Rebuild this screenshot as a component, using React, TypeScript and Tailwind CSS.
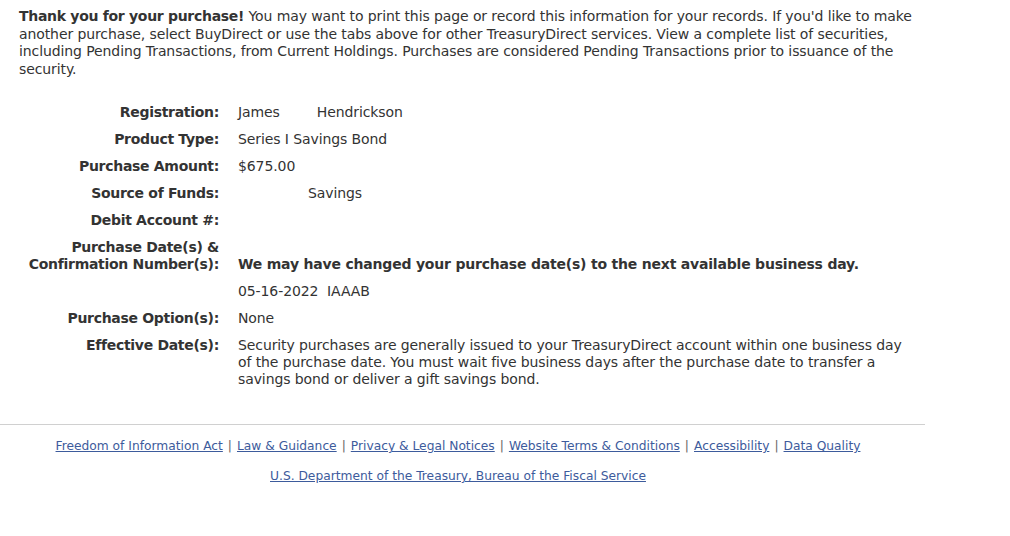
const rows = [
  { label: 'Registration:', value: 'registration' },
  { label: 'Product Type:', value: 'Series I Savings Bond' },
  { label: 'Purchase Amount:', value: '$675.00' },
  { label: 'Source of Funds:', value: 'funds' },
  { label: 'Debit Account #:', value: '' },
];

const footerLinks = [
  'Freedom of Information Act',
  'Law & Guidance',
  'Privacy & Legal Notices',
  'Website Terms & Conditions',
  'Accessibility',
  'Data Quality',
];

const Row = ({ label, children, align = 'items-start' }: { label: React.ReactNode; children?: React.ReactNode; align?: string }) => (
  <div className={`flex ${align} py-[5px]`}>
    <div className="w-[200px] shrink-0 text-right font-bold tracking-[-0.3px]">{label}</div>
    <div className="pl-[19px] flex-1">{children}</div>
  </div>
);

export default function App() {
  return (
    <div className="w-[1010px] h-[536px] bg-white text-[#333] text-[14px] leading-[17px] tracking-[-0.1px]" style={{ fontFamily: '"DejaVu Sans", Verdana, sans-serif' }}>
      <div className="w-[925px]">
        <div className="pl-[19px] pt-[8px]">
          <p className="leading-[17.6px]">
            <b className="tracking-[-0.3px]">Thank you for your purchase!</b> You may want to print this page or record this information for your records. If you'd like to make another purchase, select BuyDirect or use the tabs above for other TreasuryDirect services. View a complete list of securities, including Pending Transactions, from Current Holdings. Purchases are considered Pending Transactions prior to issuance of the security.
          </p>

          <div className="mt-[21px]">
            {rows.map((r) => (
              <Row key={r.label} label={r.label}>
                {r.value === 'registration' ? (
                  <span>
                    James<span className="inline-block w-[37px]" />Hendrickson
                  </span>
                ) : r.value === 'funds' ? (
                  <span className="pl-[70px]">Savings</span>
                ) : (
                  r.value
                )}
              </Row>
            ))}
            <Row
              align="items-end"
              label={
                <>
                  Purchase Date(s) &amp;
                  <br />
                  Confirmation Number(s):
                </>
              }
            >
              <b className="tracking-[-0.2px]">We may have changed your purchase date(s) to the next available business day.</b>
            </Row>
            <Row label="">
              <span className="whitespace-pre">05-16-2022  IAAAB</span>
            </Row>
            <Row label="Purchase Option(s):">None</Row>
            <Row label="Effective Date(s):">
              <span className="block pr-[6px]">
                Security purchases are generally issued to your TreasuryDirect account within one business day of the purchase date. You must wait five business days after the purchase date to transfer a savings bond or deliver a gift savings bond.
              </span>
            </Row>
          </div>
        </div>

        <div className="mt-[31px] border-t border-[#d0d0d0]" />

        <div className="pt-[13px] pr-[9px] text-[12.25px] leading-[17px] tracking-normal text-center">
          <div className="flex justify-center gap-[5px] text-[#666]">
            {footerLinks.map((l, i) => (
              <span key={l} className="flex gap-[5px]">
                {i > 0 && <span>|</span>}
                <a href="#" className="text-[#3d5b9c] underline">{l}</a>
              </span>
            ))}
          </div>
          <div className="mt-[13px]">
            <a href="#" className="text-[#3d5b9c] underline">U.S. Department of the Treasury, Bureau of the Fiscal Service</a>
          </div>
        </div>
      </div>
    </div>
  );
}
